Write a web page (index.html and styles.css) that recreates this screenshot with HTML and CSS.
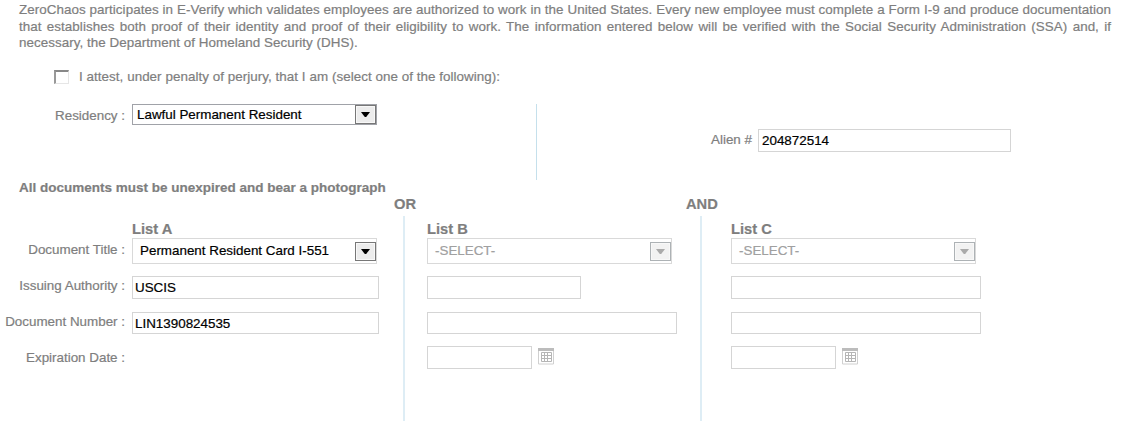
FILE: index.html
```html
<!DOCTYPE html>
<html lang="en">
<head>
<meta charset="utf-8">
<title>Form I-9</title>
<link rel="stylesheet" href="styles.css">
</head>
<body>
<p class="intro">ZeroChaos participates in E-Verify which validates employees are authorized to work in the United States. Every new employee must complete a Form I-9 and produce documentation that establishes both proof of their identity and proof of their eligibility to work. The information entered below will be verified with the Social Security Administration (SSA) and, if necessary, the Department of Homeland Security (DHS).</p>
<div class="attest"><span class="checkbox"></span><span>I attest, under penalty of perjury, that I am (select one of the following):</span></div>
<section class="status">
  <div class="residency">
    <span class="label">Residency :</span>
    <div class="select select-dark"><span>Lawful Permanent Resident</span><span class="drop"><svg width="9" height="5" viewBox="0 0 9 5"><path d="M0 0h9L5.2 5H3.8z"/></svg></span></div>
  </div>
  <div class="alien"><span class="alien-label">Alien #</span><input class="field alien-field" value="204872514"></div>
</section>
<h2 class="notice">All documents must be unexpired and bear a photograph</h2>
<section class="lists">
  <div class="labels">
    <span class="label">Document Title :</span>
    <span class="label">Issuing Authority :</span>
    <span class="label">Document Number :</span>
    <span class="label">Expiration Date :</span>
  </div>
  <div class="list list-a">
    <h3>List A</h3>
    <div class="select"><span>Permanent Resident Card I-551</span><span class="drop"><svg width="9" height="5" viewBox="0 0 9 5"><path d="M0 0h9L5.2 5H3.8z"/></svg></span></div>
    <input class="field issuer" value="USCIS">
    <input class="field number" value="LIN1390824535">
  </div>
  <div class="join join-or"><b>OR</b><i></i></div>
  <div class="list list-b">
    <h3>List B</h3>
    <div class="select disabled"><span>-SELECT-</span><span class="drop"><svg width="9" height="5" viewBox="0 0 9 5"><path d="M0 0h9L5.2 5H3.8z"/></svg></span></div>
    <input class="field issuer">
    <input class="field number">
    <div class="date"><input class="field"><svg class="calendar" width="16" height="17" viewBox="0 0 16 17"><path class="frame" d="M.5 1v15h15V1"/><path class="bar" d="M0 0h16v3H0z"/><path class="cells" d="M3.5 4.5h10v9h-10zM3.5 7.5h10M3.5 10.5h10M6.5 4.5v9M9.5 4.5v9"/></svg></div>
  </div>
  <div class="join join-and"><b>AND</b><i></i></div>
  <div class="list list-c">
    <h3>List C</h3>
    <div class="select disabled"><span>-SELECT-</span><span class="drop"><svg width="9" height="5" viewBox="0 0 9 5"><path d="M0 0h9L5.2 5H3.8z"/></svg></span></div>
    <input class="field issuer">
    <input class="field number">
    <div class="date"><input class="field"><svg class="calendar" width="16" height="17" viewBox="0 0 16 17"><path class="frame" d="M.5 1v15h15V1"/><path class="bar" d="M0 0h16v3H0z"/><path class="cells" d="M3.5 4.5h10v9h-10zM3.5 7.5h10M3.5 10.5h10M6.5 4.5v9M9.5 4.5v9"/></svg></div>
  </div>
</section>
</body>
</html>
```
FILE: styles.css
```css
* { box-sizing: border-box; }
body {
  margin: 0;
  width: 1132px;
  height: 427px;
  overflow: hidden;
  background: #fff;
  color: #7e7e7e;
  font: 13.4px/16px "Liberation Sans", Arial, sans-serif;
  -webkit-text-stroke-width: .2px;
}
h2, h3, p { margin: 0; }
.intro {
  height: 70px;
  padding: 2px 21px 0 19px;
  line-height: 16.7px;
  letter-spacing: .05px;
  text-align: justify;
}
.attest {
  display: flex;
  height: 34px;
  padding-left: 54px;
  gap: 10px;
  line-height: 14px;
  letter-spacing: .05px;
}
.checkbox {
  width: 15px;
  height: 14px;
  border: 1px solid #e6e6e6;
  border-top: 2px solid #888;
  border-left: 2px solid #999;
}
.status { display: flex; height: 76px; }
.residency {
  display: flex;
  width: 537px;
  border-right: 1px solid #c5e0ec;
}
.label {
  width: 125px;
  text-align: right;
  white-space: nowrap;
}
.residency .label { margin-right: 7px; padding-top: 4px; }
.select {
  display: flex;
  align-items: center;
  justify-content: space-between;
  width: 245px;
  height: 26px;
  padding-left: 7px;
  border: 1px solid #d9d9d9;
  color: #000;
  white-space: nowrap;
}
.select-dark {
  height: 21px;
  padding-left: 4px;
  border-color: #a0a2a8;
}
.drop {
  display: flex;
  align-items: center;
  justify-content: center;
  width: 21px;
  height: 19px;
  border: 1px solid #777;
  background: #ececec;
  box-shadow: inset 0 0 0 1px #f8f8f8;
}
.disabled { color: #a0a0a0; }
.disabled .drop { border-color: #adb2b5; background: #f2f2f2; }
.disabled path { fill: #aaa; }
.alien {
  display: flex;
  height: 23px;
  margin: 25px 0 0 174px;
}
.alien-label { width: 47px; padding-top: 3px; }
.field {
  display: block;
  height: 22px;
  margin: 0;
  padding: 0 2px;
  border: 1px solid #d5d5d5;
  border-radius: 0;
  background: #fff;
  color: #000;
  font: inherit;
}
.alien-field { width: 253px; height: 23px; padding-left: 3px; }
.notice { height: 16px; padding-left: 19px; font-size: 13.5px; }
.lists { display: flex; height: 225px; }
.labels {
  display: grid;
  grid-auto-rows: 36px;
  align-content: start;
  width: 132px;
  padding-top: 46px;
}
.list { padding-top: 25px; }
.list-a { width: 262px; }
.list-b { width: 259px; }
.list h3, .join b {
  display: block;
  height: 17px;
  font-size: 14.7px;
  line-height: 17px;
}
.issuer { width: 250px; height: 23px; margin-top: 12px; }
.number { width: 250px; margin: 13px 0 12px; }
.list-a .field { width: 247px; }
.list-b .issuer { width: 154px; }
.join { width: 33px; }
.join b { height: 20px; }
.join i {
  display: block;
  width: 2px;
  height: 205px;
  margin-left: 9px;
  background: #deedf5;
}
.join-and { width: 45px; }
.join-and i { margin-left: 14px; }
.date { display: flex; align-items: flex-start; gap: 6px; }
.date .field { width: 105px; height: 23px; }
.calendar { margin-top: 2px; }
.frame { fill: #fff; stroke: #d0d0d0; }
.bar { fill: #bcbcbc; }
.cells { fill: none; stroke: #b5b5b5; }
```
